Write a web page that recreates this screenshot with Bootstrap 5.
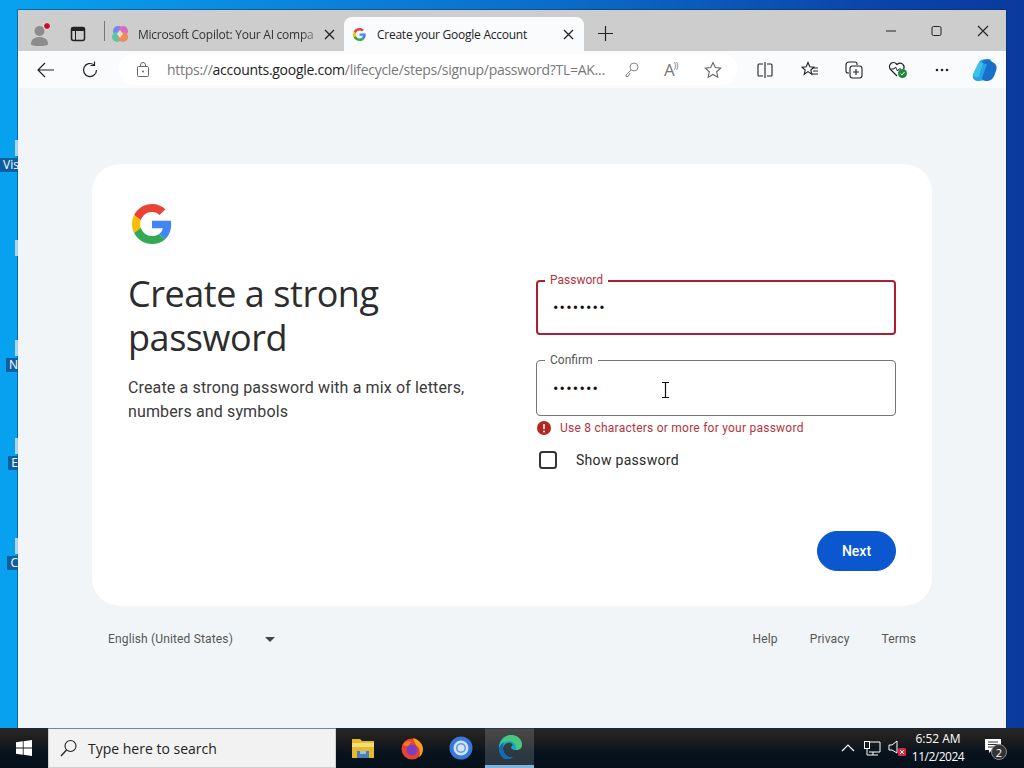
<!DOCTYPE html>
<html lang="en">
<head>
<meta charset="utf-8">
<title>Create your Google Account</title>
<link href="https://cdn.jsdelivr.net/npm/bootstrap@5.3.0/dist/css/bootstrap.min.css" rel="stylesheet">
<style>
html,body{height:768px;overflow:hidden}
body{font-family:"Roboto","Liberation Sans",sans-serif;color:#1f1f1f;background:#0a7fd8}
.screen{width:1024px;height:768px}
.desk{flex:1 1 0;min-height:0;position:relative;padding:10px 18px 0;background:linear-gradient(90deg,#08a2f0 0%,#0a8ee2 20%,#0a6cc8 55%,#0a45aa 85%,#0a3a9e 100%)}
.deskitem{position:absolute;left:0;width:18px;height:40px;overflow:hidden;font:12px "Open Sans",sans-serif;color:#fff;text-align:right}
.deskitem i{display:block;width:3px;height:16px;background:#d7e6f2;margin:0 0 0 auto;opacity:.8}
.deskitem span{display:inline-block;background:#0c5f9f;height:14px;line-height:14px;white-space:nowrap;padding-left:3px}
.win{height:718px;background:#f1f5f8;box-shadow:0 0 0 1px rgba(10,40,80,.45)}
.tabbar{height:41px;background:#cdcdcd;font:12px "Open Sans",sans-serif;color:#333;letter-spacing:-.25px}
.lefttools{width:87px;padding:6px 0 0 12px}
.tab1{width:239px;height:34px;margin-top:7px;padding-left:6px}
.tab2{width:240px;height:34px;margin-top:7px;background:#f9fbfc;border-radius:8px 8px 0 0;padding-left:9px;color:#222}
.tabtitle{white-space:nowrap;flex:1 1 0}
.tab1 .tabtitle{-webkit-mask-image:linear-gradient(90deg,#000 88%,transparent);mask-image:linear-gradient(90deg,#000 88%,transparent)}
.sep{width:1px;height:20px;background:#777;margin-top:-6px}
.plusbtn{margin:6px 0 0 14px}
.toolbar{height:37px;background:#f9fbfc;padding-left:19px}
.omni{width:618px;height:31px;margin-left:20px;background:#fff;border-radius:15px;padding:0 15px 0 18px;font:14px "Open Sans",sans-serif;color:#777;letter-spacing:-.27px}
.omni b{font-weight:400;color:#222}
.urltext{white-space:nowrap;margin-left:18px}
.readicon{color:#777;font-size:17px;line-height:1;width:20px;margin-left:25px;white-space:nowrap}
.readicon span{font-size:9px;vertical-align:top;margin-left:-1px}
.pagezone{flex:1 1 0;padding-top:76px}
.signin{width:840px;height:442px;background:#fff;border-radius:28px;padding:40px 36px 35px 36px;margin:0 auto}
.logo{margin-left:4px;width:40px;height:40px;display:block}
.headline{font-family:"Open Sans","Roboto",sans-serif;font-size:36px;line-height:44px;font-weight:400;margin:28px 0 0;color:#2c2c2c;letter-spacing:-.45px}
.subtext{font-size:16px;line-height:24px;margin:16px 0 0;color:#3a3a3a;letter-spacing:.14px}
.rightcol{width:360px;padding-top:9px;margin-top:27px}
.leftcol{width:372px;margin-right:36px}
.fieldwrap{position:relative}
.fieldwrap+.fieldwrap{margin-top:25px}
.pw{height:55px;border-radius:4px;border:1px solid #747775;padding:0 16px;font-size:16px;letter-spacing:1.2px;color:#111}
.pw:focus{box-shadow:none}
.pw.bad{height:55px;border:2px solid #ab1e34;padding:0 15px}
.confirm{height:56px}
.flabel{position:absolute;left:9px;top:-8px;padding:0 5px;background:#fff;font-size:12px;line-height:16px;color:#555}
.flabel.bad{color:#b3343c}
.beam{position:absolute;left:125px;top:22px}
.errline{font-size:12px;line-height:16px;color:#b3343c;margin-top:4px;gap:9px;padding-left:1px;letter-spacing:.24px}
.showrow{margin-top:14px;font-size:14px;color:#2a2a2a;gap:19px;padding-left:3px;height:20px;letter-spacing:.3px}
.tick{width:18px;height:18px;margin:0;border:2px solid #333;border-radius:2px;background:#fff}
.nextbtn{width:79px;height:40px;background:#0b57d0;border-color:#0b57d0;font-size:14px;font-weight:500;padding:0;margin-top:61px;margin-left:auto;display:block}
.foot{width:840px;margin:24px auto 0;padding:0 16px;font-size:12px;line-height:18px;color:#555;letter-spacing:.15px}
.caret{width:0;height:0;border-left:5px solid transparent;border-right:5px solid transparent;border-top:5px solid #444;margin-left:32px}
.foot a{color:#555;text-decoration:none}
.taskbar{height:40px;background:linear-gradient(180deg,#272727 0%,#1d1d1d 30%,#07121d 65%,#04101a 100%);color:#fff;font:12px "Open Sans",sans-serif}
.startbtn{width:48px;height:40px}
.search{width:288px;height:40px;background:#f2f2f2;border:1px solid #d0d0d0;color:#222;font-size:14px;padding-left:11px;gap:10px}
.tb{width:49px;height:40px}
.tbactive{background:rgba(255,255,255,.16);border-bottom:3px solid #7db6de}
.tray{margin-left:auto;padding-right:18px}
.clock{width:60px;text-align:center;line-height:18px;font-size:12px;white-space:nowrap}
.clock div+div{letter-spacing:-.5px}
</style>
</head>
<body>
<svg width="0" height="0" class="d-block position-absolute">
<symbol id="gg" viewBox="0 0 48 48">
<path fill="#EA4335" d="M24 9.5c3.54 0 6.71 1.22 9.21 3.6l6.85-6.85C35.9 2.38 30.47 0 24 0 14.62 0 6.51 5.38 2.56 13.22l7.98 6.19C12.43 13.72 17.74 9.5 24 9.5z"/>
<path fill="#4285F4" d="M46.98 24.55c0-1.57-.15-3.09-.38-4.55H24v9.02h12.94c-.58 2.96-2.26 5.48-4.78 7.18l7.73 6c4.51-4.18 7.09-10.36 7.09-17.65z"/>
<path fill="#FBBC05" d="M10.53 28.59c-.48-1.45-.76-2.99-.76-4.59s.27-3.14.76-4.59l-7.98-6.19C.92 16.46 0 20.12 0 24c0 3.88.92 7.54 2.56 10.78l7.97-6.19z"/>
<path fill="#34A853" d="M24 48c6.48 0 11.93-2.13 15.89-5.81l-7.73-6c-2.15 1.45-4.92 2.3-8.16 2.3-6.26 0-11.57-4.22-13.47-9.91l-7.98 6.19C6.51 42.62 14.62 48 24 48z"/>
</symbol>
</svg>
<div class="screen d-flex flex-column">
  <div class="desk">
    <div class="deskitem" style="top:140px"><i></i><span>Vis</span></div>
    <div class="deskitem" style="top:240px"><i></i></div>
    <div class="deskitem" style="top:340px"><i></i><span>N</span></div>
    <div class="deskitem" style="top:438px"><i></i><span>E</span></div>
    <div class="deskitem" style="top:538px"><i></i><span>C</span></div>
    <div class="win d-flex flex-column">
      <div class="tabbar d-flex align-items-center">
        <div class="lefttools d-flex align-items-center">
          <svg width="22" height="26" viewBox="0 0 22 26"><circle cx="9.500" cy="10" r="5" fill="#8c8c8c"/><path d="M1 23c0-5 4-7 8.500-7S18 18 18 23c0 1.500-4 2-8.500 2S1 24.500 1 23z" fill="#8c8c8c"/><circle cx="17" cy="5" r="3.500" fill="#c4102a" stroke="#eee" stroke-width="1"/></svg>
          <svg width="16" height="16" viewBox="0 0 16 16" style="margin-left:18px"><rect x="1.500" y="1.500" width="13" height="13" rx="2" fill="none" stroke="#222" stroke-width="1.500"/><rect x="1.500" y="1.500" width="13" height="3.500" fill="#222"/><path d="M5.500 5v9" stroke="#222"/></svg>
          <span class="sep ms-auto"></span>
        </div>
        <div class="tab1 d-flex align-items-center">
          <svg width="18" height="18" viewBox="0 0 18 18"><circle cx="7" cy="6" r="5" fill="#6a8fe8"/><circle cx="12" cy="6" r="5" fill="#d86ac8"/><circle cx="6" cy="12" r="5" fill="#5cc6a0"/><circle cx="12" cy="12" r="5" fill="#ef8a5a"/><path d="M6 9l3-4 3 4-3 4z" fill="#fff" opacity=".7"/></svg>
          <span class="tabtitle" style="margin-left:9px">Microsoft Copilot: Your AI compa</span>
          <svg width="11" height="11" viewBox="0 0 11 11" style="margin-right:9px"><path d="M1 1l9 9M10 1l-9 9" stroke="#222" stroke-width="1.300"/></svg>
        </div>
        <div class="tab2 d-flex align-items-center">
          <svg width="13" height="13"><use href="#gg"/></svg>
          <span class="tabtitle" style="margin-left:11px">Create your Google Account</span>
          <svg width="11" height="11" viewBox="0 0 11 11" style="margin-right:10px"><path d="M1 1l9 9M10 1l-9 9" stroke="#222" stroke-width="1.300"/></svg>
        </div>
        <svg class="plusbtn" width="15" height="15" viewBox="0 0 15 15"><path d="M7.500 0v15M0 7.500h15" stroke="#222" stroke-width="1.200"/></svg>
        <div class="ms-auto d-flex align-items-center">
          <svg width="46" height="12" viewBox="0 0 46 12"><path d="M18 6h10" stroke="#222"/></svg>
          <svg width="46" height="12" viewBox="0 0 46 12"><rect x="18" y="1.500" width="9" height="9" rx="1.500" fill="none" stroke="#222"/></svg>
          <svg width="46" height="12" viewBox="0 0 46 12"><path d="M18 1l10 10M28 1L18 11" stroke="#222" stroke-width="1.100"/></svg>
        </div>
      </div>
      <div class="toolbar d-flex align-items-center">
        <svg width="18" height="16" viewBox="0 0 18 16"><path d="M8 1L1 8l7 7M1 8h16" fill="none" stroke="#222" stroke-width="1.200"/></svg>
        <svg width="18" height="18" viewBox="0 0 18 18" style="margin-left:26px"><path d="M15.500 9A6.500 6.500 0 1 1 13 3.900" fill="none" stroke="#222" stroke-width="1.200"/><path d="M13.500 0.500v4h-4" fill="none" stroke="#222" stroke-width="1.200"/></svg>
        <div class="omni d-flex align-items-center">
          <svg width="12" height="15" viewBox="0 0 12 15"><rect x="0.500" y="4.500" width="11" height="10" rx="1" fill="none" stroke="#666"/><path d="M3.500 4.500V3a2.500 2.500 0 0 1 5 0v1.500" fill="none" stroke="#666"/><circle cx="6" cy="9.500" r="1" fill="#666"/></svg>
          <span class="urltext">https://<b>accounts.google.com</b>/lifecycle/steps/signup/password?TL=AK...</span>
          <svg class="ms-auto" width="14" height="15" viewBox="0 0 14 15"><circle cx="9" cy="5" r="4" fill="none" stroke="#888"/><path d="M6 8l-5 5v1.500h2L4 13l1-2" fill="none" stroke="#888"/></svg>
          <span class="readicon">A<span>))</span></span>
          <svg width="18" height="17" viewBox="0 0 18 17" style="margin-left:20px"><path d="M9 1.500l2.300 5 5.400.6-4 3.700 1.100 5.400L9 13.500l-4.800 2.700 1.100-5.400-4-3.700 5.400-.6z" fill="none" stroke="#666" stroke-width="1.100"/></svg>
        </div>
        <div class="d-flex align-items-center" style="margin-left:20px">
          <svg width="16" height="16" viewBox="0 0 16 16"><path d="M6 2H2a1 1 0 0 0-1 1v10a1 1 0 0 0 1 1h4M10 2h4a1 1 0 0 1 1 1v10a1 1 0 0 1-1 1h-4M8 0v16" fill="none" stroke="#222" stroke-width="1.100"/></svg>
          <svg width="18" height="17" viewBox="0 0 18 17" style="margin-left:28px"><path d="M7 1.500l1.800 4.300 4.200.4-3.200 2.800 1 4.300L7 10.600l-3.800 2.700 1-4.300L1 6.200l4.200-.4z" fill="none" stroke="#222" stroke-width="1.100"/><path d="M12 7h5M12 10h5M11 13h6" stroke="#222"/></svg>
          <svg width="18" height="18" viewBox="0 0 18 18" style="margin-left:26px"><path d="M4 12H3a2 2 0 0 1-2-2V4a3 3 0 0 1 3-3h6a2 2 0 0 1 2 2v1" fill="none" stroke="#222" stroke-width="1.100"/><rect x="5" y="5" width="12" height="12" rx="2.500" fill="none" stroke="#222" stroke-width="1.100"/><path d="M11 8v6M8 11h6" stroke="#222" stroke-width="1.100"/></svg>
          <svg width="20" height="18" viewBox="0 0 20 18" style="margin-left:25px"><path d="M9 15L2.500 8.500a4 4 0 0 1 6-5.500l.5.600.6-.6a4 4 0 0 1 6 5" fill="none" stroke="#222" stroke-width="1.200"/><path d="M3 8h3l1.500-2 2 4 1.500-2h2" fill="none" stroke="#222"/><circle cx="14.500" cy="12.500" r="4.500" fill="#1c8c3c"/><path d="M12.500 12.500l1.500 1.500 2.500-3" fill="none" stroke="#fff"/></svg>
          <svg width="14" height="4" viewBox="0 0 14 4" style="margin-left:27px"><circle cx="2" cy="2" r="1.300" fill="#222"/><circle cx="7" cy="2" r="1.300" fill="#222"/><circle cx="12" cy="2" r="1.300" fill="#222"/></svg>
          <svg width="26" height="24" viewBox="0 0 26 24" style="margin-left:22px"><path d="M8 4c2-3 6-3 9-3 3 0 4 2 3 4l-5 14c-1 3-4 4-7 4-4 0-7-2-6-6z" fill="#27a3e8"/><path d="M10 5c2-3 5-4 8-3l5 3c3 2 3 5 2 8l-2 5c-1 3-4 5-8 5-2 0-4-1-4-3l5-14z" fill="#1670c9"/><path d="M2 16l5-10c1-2 3-2 5-1L8 18c-1 2-5 2-6-2z" fill="#3bc3ee"/></svg>
        </div>
      </div>
      <div class="pagezone">
        <div class="signin">
          <svg class="logo"><use href="#gg"/></svg>
          <div class="d-flex">
            <div class="leftcol">
              <h1 class="headline">Create a strong password</h1>
              <p class="subtext">Create a strong password with a mix of letters, numbers and symbols</p>
            </div>
            <div class="rightcol">
              <div class="fieldwrap">
                <input type="password" class="form-control pw bad" value="abcdefgh" aria-label="Password">
                <span class="flabel bad">Password</span>
              </div>
              <div class="fieldwrap">
                <input type="password" class="form-control pw confirm" value="abcdefg" aria-label="Confirm">
                <span class="flabel">Confirm</span>
                <svg class="beam" width="9" height="16" viewBox="0 0 9 16"><path d="M1 .5h7M1 15.500h7M4.500 .5v15" fill="none" stroke="#111" stroke-width="1.200"/></svg>
              </div>
              <div class="errline d-flex align-items-center">
                <svg width="14" height="14" viewBox="0 0 14 14"><circle cx="7" cy="7" r="7" fill="#b3261e"/><path d="M7 3v5" stroke="#fff" stroke-width="1.600"/><circle cx="7" cy="10.500" r="1" fill="#fff"/></svg>
                <span>Use 8 characters or more for your password</span>
              </div>
              <div class="showrow d-flex align-items-center">
                <input type="checkbox" class="tick form-check-input" id="show">
                <label for="show">Show password</label>
              </div>
              <button class="btn btn-primary rounded-pill nextbtn">Next</button>
            </div>
          </div>
        </div>
        <div class="foot d-flex align-items-center">
          <span>English (United States)</span><span class="caret"></span>
          <a href="#" class="ms-auto">Help</a><a href="#" style="margin-left:32px">Privacy</a><a href="#" style="margin-left:32px">Terms</a>
        </div>
      </div>
    </div>
  </div>
  <div class="taskbar d-flex align-items-center">
    <div class="startbtn d-flex align-items-center justify-content-center">
      <svg width="16" height="16" viewBox="0 0 16 16"><path d="M0 2.300l6.800-1v6.300H0zM7.600 1.200L16 0v7.600H7.600zM0 8.400h6.800v6.300L0 13.700zM7.600 8.400H16V16l-8.400-1.200z" fill="#fff"/></svg>
    </div>
    <div class="search d-flex align-items-center">
      <svg width="18" height="18" viewBox="0 0 18 18"><circle cx="10.500" cy="7" r="5.500" fill="none" stroke="#222" stroke-width="1.100"/><path d="M6.500 11L1 17" stroke="#222" stroke-width="1.300"/></svg>
      <span>Type here to search</span>
    </div>
    <div class="tb d-flex align-items-center justify-content-center" style="margin-left:2px">
      <svg width="22" height="20" viewBox="0 0 22 20"><path d="M0 1h8l2 2h12v17H0z" fill="#e8b92c"/><path d="M0 5h22v4H0z" fill="#f7dd76"/><rect x="5" y="13" width="12" height="7" fill="#4a7fb8"/><rect x="8" y="13" width="6" height="3" fill="#9cc0e0"/></svg>
    </div>
    <div class="tb d-flex align-items-center justify-content-center">
      <svg width="24" height="24" viewBox="0 0 24 24"><circle cx="12" cy="13" r="10.500" fill="#e8432e"/><path d="M13 2c6 2 10 6 10 11 0 4-2 7-4 8 2-4 1-9-3-12-1-2-2-4-3-7z" fill="#f9a01b"/><path d="M3 8c3-3 7-4 9-1-3 0-3 2-3 3-3 0-5 0-6-2z" fill="#f57a1e"/><circle cx="12" cy="14" r="5.500" fill="#7b3fc0"/></svg>
    </div>
    <div class="tb d-flex align-items-center justify-content-center">
      <svg width="24" height="24" viewBox="0 0 24 24"><circle cx="12" cy="12" r="11.500" fill="#3a78d8"/><circle cx="12" cy="12" r="7.500" fill="#cfe2f8"/><circle cx="12" cy="12" r="5" fill="#5a95e4"/><circle cx="12" cy="12" r="3.500" fill="#d6e6fa"/></svg>
    </div>
    <div class="tb tbactive d-flex align-items-center justify-content-center">
      <svg width="26" height="26" viewBox="0 0 26 26"><path d="M2 14C2 6 7 1 14 1c6 0 11 4 11 10 0 3-3 5-6 5-4 0-5-2-5-3 2-1 2-3 0-4-4-1-8 2-8 6 0 5 5 9 10 8-2 1-4 2-6 2C6 25 2 20 2 14z" fill="#16a5cf"/><path d="M2 14C3 6 9 1 14 1c6 0 11 4 11 10 0 3-3 5-6 5 1-5-2-9-7-9-4 0-8 3-10 7z" fill="#48c97a"/><path d="M6 15c0 5 5 9 10 8-2 1-4 2-6 2-5 0-8-5-8-11 1-3 3-5 5-6-1 2-1 4-1 7z" fill="#0f6cb8"/></svg>
    </div>
    <div class="tray d-flex align-items-center">
      <svg width="14" height="8" viewBox="0 0 14 8"><path d="M1 7l6-6 6 6" fill="none" stroke="#fff" stroke-width="1.200"/></svg>
      <svg width="17" height="15" viewBox="0 0 17 15" style="margin-left:9px"><path d="M5.500 1H16v10H5" fill="none" stroke="#fff"/><rect x="0.500" y="0.500" width="5" height="7" fill="none" stroke="#fff"/><path d="M3 8v6M3 14h11M9 11v3" stroke="#fff"/></svg>
      <svg width="18" height="16" viewBox="0 0 18 16" style="margin-left:7px"><path d="M1 5h3l5-4v12L4 10H1z" fill="none" stroke="#fff"/><rect x="10" y="8" width="8" height="8" rx="1.500" fill="#d8283c"/><path d="M12 10l4 4M16 10l-4 4" stroke="#fff"/></svg>
      <div class="clock" style="margin-left:2px"><div>6:52 AM</div><div>11/2/2024</div></div>
      <div class="position-relative" style="margin-left:16px;width:22px;height:24px">
        <svg width="18" height="16" viewBox="0 0 18 16"><path d="M1 1h16v11H8l-3 3v-3H1z" fill="#fff"/><path d="M4 4h10M4 6.500h10M4 9h10" stroke="#333"/></svg>
        <span class="position-absolute rounded-circle d-flex align-items-center justify-content-center" style="left:7px;top:8px;width:16px;height:16px;background:#333;border:1px solid #888;font-size:11px">2</span>
      </div>
    </div>
  </div>
</div>
</body>
</html>
